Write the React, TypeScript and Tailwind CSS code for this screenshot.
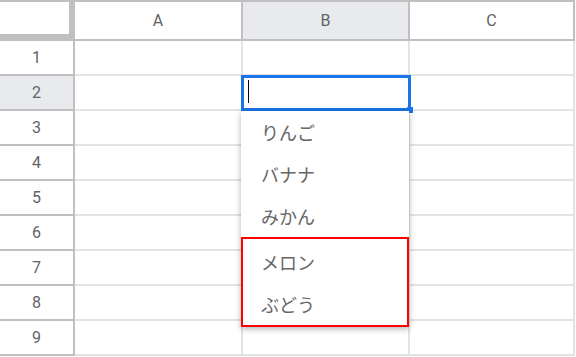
import React from "react";

const cols = [
  { label: "A", w: "w-[168px]", sel: false },
  { label: "B", w: "w-[167px]", sel: true },
  { label: "C", w: "w-[165px]", sel: false },
];

const rows = [1, 2, 3, 4, 5, 6, 7, 8, 9];

export default function App() {
  return (
    <div className="relative w-[576px] h-[357px] bg-white overflow-hidden font-['Roboto','Liberation_Sans',sans-serif]">
      <div className="w-[575px] border-t-2 border-[#c0c0c0]">
        <div className="flex h-[39px]">
          <div className="w-[75px] h-[39px] bg-white border-r-[6px] border-b-[7px] border-[#c0c0c0]" />
          {cols.map((c) => (
            <div
              key={c.label}
              className={`${c.w} h-[39px] flex items-center justify-center border-r-2 border-b-2 border-[#c0c0c0] text-[16px] text-[#5f6368] ${c.sel ? "bg-[#e8eaed]" : "bg-white"}`}
            >
              {c.label}
            </div>
          ))}
        </div>
        {rows.map((r) => (
          <div key={r} className="flex h-[35px]">
            <div
              className={`w-[75px] h-[35px] flex items-center justify-center border-r-2 border-b-2 border-[#c0c0c0] text-[16px] text-[#5f6368] ${r === 2 ? "bg-[#e8eaed]" : "bg-white"}`}
            >
              {r}
            </div>
            {cols.map((c) => (
              <div
                key={c.label}
                className={`${c.w} h-[35px] border-r-2 border-b-2 border-[#e2e3e3] bg-white`}
              />
            ))}
          </div>
        ))}
      </div>

      {/* active cell editor */}
      <div className="absolute left-[241px] top-[75px] w-[170px] h-[36px] border-[3px] border-[#1a73e8] bg-white">
        <div className="absolute left-[4px] top-[2px] w-[1px] h-[23px] bg-black" />
      </div>
      <div className="absolute left-[407px] top-[107px] w-[6px] h-[6px] bg-[#1a73e8]" />

      {/* dropdown */}
      <div className="absolute left-[241px] top-[111px] w-[168px] bg-white shadow-[0_2px_6px_rgba(0,0,0,0.3)] font-['Noto_Sans_CJK_JP',sans-serif] text-[18px] text-[#666666]">
        {["りんご", "バナナ", "みかん"].map((t) => (
          <div key={t} className="h-[42px] flex items-center pl-[20px]">
            {t}
          </div>
        ))}
        <div className="border-2 border-[#ff0000] pt-[2px]">
          {["メロン", "ぶどう"].map((t) => (
            <div key={t} className="h-[42px] flex items-center pl-[18px]">
              {t}
            </div>
          ))}
        </div>
      </div>
    </div>
  );
}
